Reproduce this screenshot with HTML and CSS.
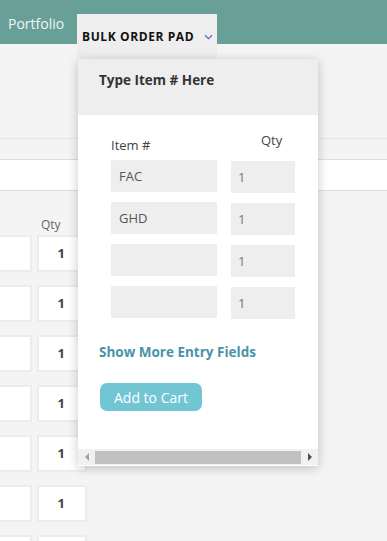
FILE: index.html
```html
<!DOCTYPE html>
<html>

<head>
    <link rel="stylesheet" href="styles.css">
</head>

<body>
    <div class="topbar">
        <a class="nav-link" href="javascript:;">Portfolio</a>
        <div class="nav-tab">
            BULK ORDER PAD
            <svg class="chev" width="9" height="6" viewBox="0 0 9 6"><path d="M1 1.2 L4.5 4.6 L8 1.2" fill="none" stroke="#5a5ae0" stroke-width="1.2"/></svg>
        </div>
    </div>

    <div class="page">
        <div class="page-rule"></div>
        <div class="search-box"></div>
        <div class="qty-head">Qty</div>
        <div class="line"><div class="cell-item"></div><div class="cell-qty">1</div></div>
        <div class="line"><div class="cell-item"></div><div class="cell-qty">1</div></div>
        <div class="line"><div class="cell-item"></div><div class="cell-qty">1</div></div>
        <div class="line"><div class="cell-item"></div><div class="cell-qty">1</div></div>
        <div class="line"><div class="cell-item"></div><div class="cell-qty">1</div></div>
        <div class="line"><div class="cell-item"></div><div class="cell-qty">1</div></div>
        <div class="line"><div class="cell-item"></div><div class="cell-qty"></div></div>
    </div>

    <div class="pad">
        <div class="pad-head">Type Item # Here</div>
        <div class="pad-body">
            <div class="pad-labels">
                <span class="lbl-item">Item #</span>
                <span class="lbl-qty">Qty</span>
            </div>
            <div class="pad-row"><div class="in-item">FAC</div><div class="in-qty">1</div></div>
            <div class="pad-row"><div class="in-item">GHD</div><div class="in-qty">1</div></div>
            <div class="pad-row"><div class="in-item"></div><div class="in-qty">1</div></div>
            <div class="pad-row"><div class="in-item"></div><div class="in-qty">1</div></div>
            <a class="more" href="javascript:;">Show More Entry Fields</a>
            <button class="cart">Add to Cart</button>
        </div>
        <div class="hscroll">
            <span class="arr arr-l"></span>
            <span class="thumb"></span>
            <span class="arr arr-r"></span>
        </div>
    </div>
</body>

</html>
```

FILE: styles.css
```css
body {
    margin: 0;
    background-color: #f4f4f4;
    font-family: "Open Sans", "Liberation Sans", sans-serif;
    overflow: hidden;
}

.topbar {
    height: 44px;
    background-color: #68a097;
    display: flex;
    align-items: center;
}

.nav-link {
    margin-left: 8px;
    margin-top: 2px;
    color: #eef6f4;
    font-size: 14px;
    text-decoration: none;
}

.nav-tab {
    position: absolute;
    left: 77px;
    top: 14px;
    width: 140px;
    height: 46px;
    padding-left: 5px;
    box-sizing: border-box;
    background-color: #eeeeee;
    color: #111;
    font-size: 12px;
    font-weight: bold;
    letter-spacing: 0.6px;
    line-height: 46px;
}

.nav-tab .chev {
    position: absolute;
    left: 127px;
    top: 20px;
}

.page {
    margin-left: -20px;
}

.page-rule {
    height: 94px;
    border-bottom: 1px solid #e6e6e6;
}

.search-box {
    margin-top: 20px;
    height: 30px;
    background-color: #fff;
    border: 1px solid #dddddd;
    width: 420px;
}

.qty-head {
    margin: 25px 0 0 61px;
    height: 19px;
    color: #666;
    font-size: 12px;
}

.line {
    display: flex;
    gap: 5px;
    margin-bottom: 13px;
}

.cell-item,
.cell-qty {
    height: 33px;
    background-color: #fff;
    border: 2px solid #ececec;
}

.cell-item {
    width: 48px;
}

.cell-qty {
    width: 26px;
    padding-right: 20px;
    text-align: right;
    color: #444;
    font-weight: bold;
    font-size: 13px;
    line-height: 33px;
}

.pad {
    position: absolute;
    left: 78px;
    top: 59px;
    width: 240px;
    height: 407px;
    background-color: #fff;
    box-shadow: 0 2px 10px rgba(0, 0, 0, 0.22);
    display: flex;
    flex-direction: column;
}

.pad-head {
    height: 56px;
    background-color: #eeeeee;
    padding-left: 21px;
    line-height: 42px;
    color: #333;
    font-size: 13.5px;
    font-weight: bold;
}

.pad-body {
    flex: 1;
    padding: 16px 0 0 33px;
}

.pad-labels {
    position: relative;
    height: 29px;
    color: #444;
    font-size: 13px;
}

.lbl-item {
    position: absolute;
    top: 5px;
}

.lbl-qty {
    position: absolute;
    left: 150px;
    top: 0;
}

.pad-row {
    display: flex;
    align-items: flex-start;
    gap: 14px;
    margin-bottom: 10px;
    height: 32px;
}

.in-item,
.in-qty {
    height: 32px;
    background-color: #eeeeee;
    color: #555;
    font-size: 13px;
    line-height: 32px;
}

.in-item {
    width: 98px;
    padding-left: 8px;
}

.in-qty {
    width: 57px;
    padding-left: 7px;
    margin-top: 1px;
    color: #777;
}

.more {
    display: block;
    margin: 25px 0 0 -12px;
    color: #4993a6;
    font-size: 13.5px;
    font-weight: bold;
    text-decoration: none;
}

.cart {
    display: block;
    margin: 22px 0 0 -11px;
    width: 102px;
    height: 28px;
    border: none;
    border-radius: 7px;
    background-color: #72c5d3;
    color: #fff;
    font-family: "Open Sans", "Liberation Sans", sans-serif;
    font-size: 14px;
}

.hscroll {
    height: 16px;
    margin-bottom: 1px;
    background-color: #f1f1f1;
    display: flex;
    align-items: center;
}

.thumb {
    flex: 1;
    height: 13px;
    background-color: #c1c1c1;
}

.arr {
    width: 17px;
    display: flex;
    justify-content: center;
}

.arr-l::before {
    content: "";
    border-right: 4px solid #a3a3a3;
    border-top: 4px solid transparent;
    border-bottom: 4px solid transparent;
}

.arr-r::before {
    content: "";
    border-left: 4px solid #505050;
    border-top: 4px solid transparent;
    border-bottom: 4px solid transparent;
}
```
